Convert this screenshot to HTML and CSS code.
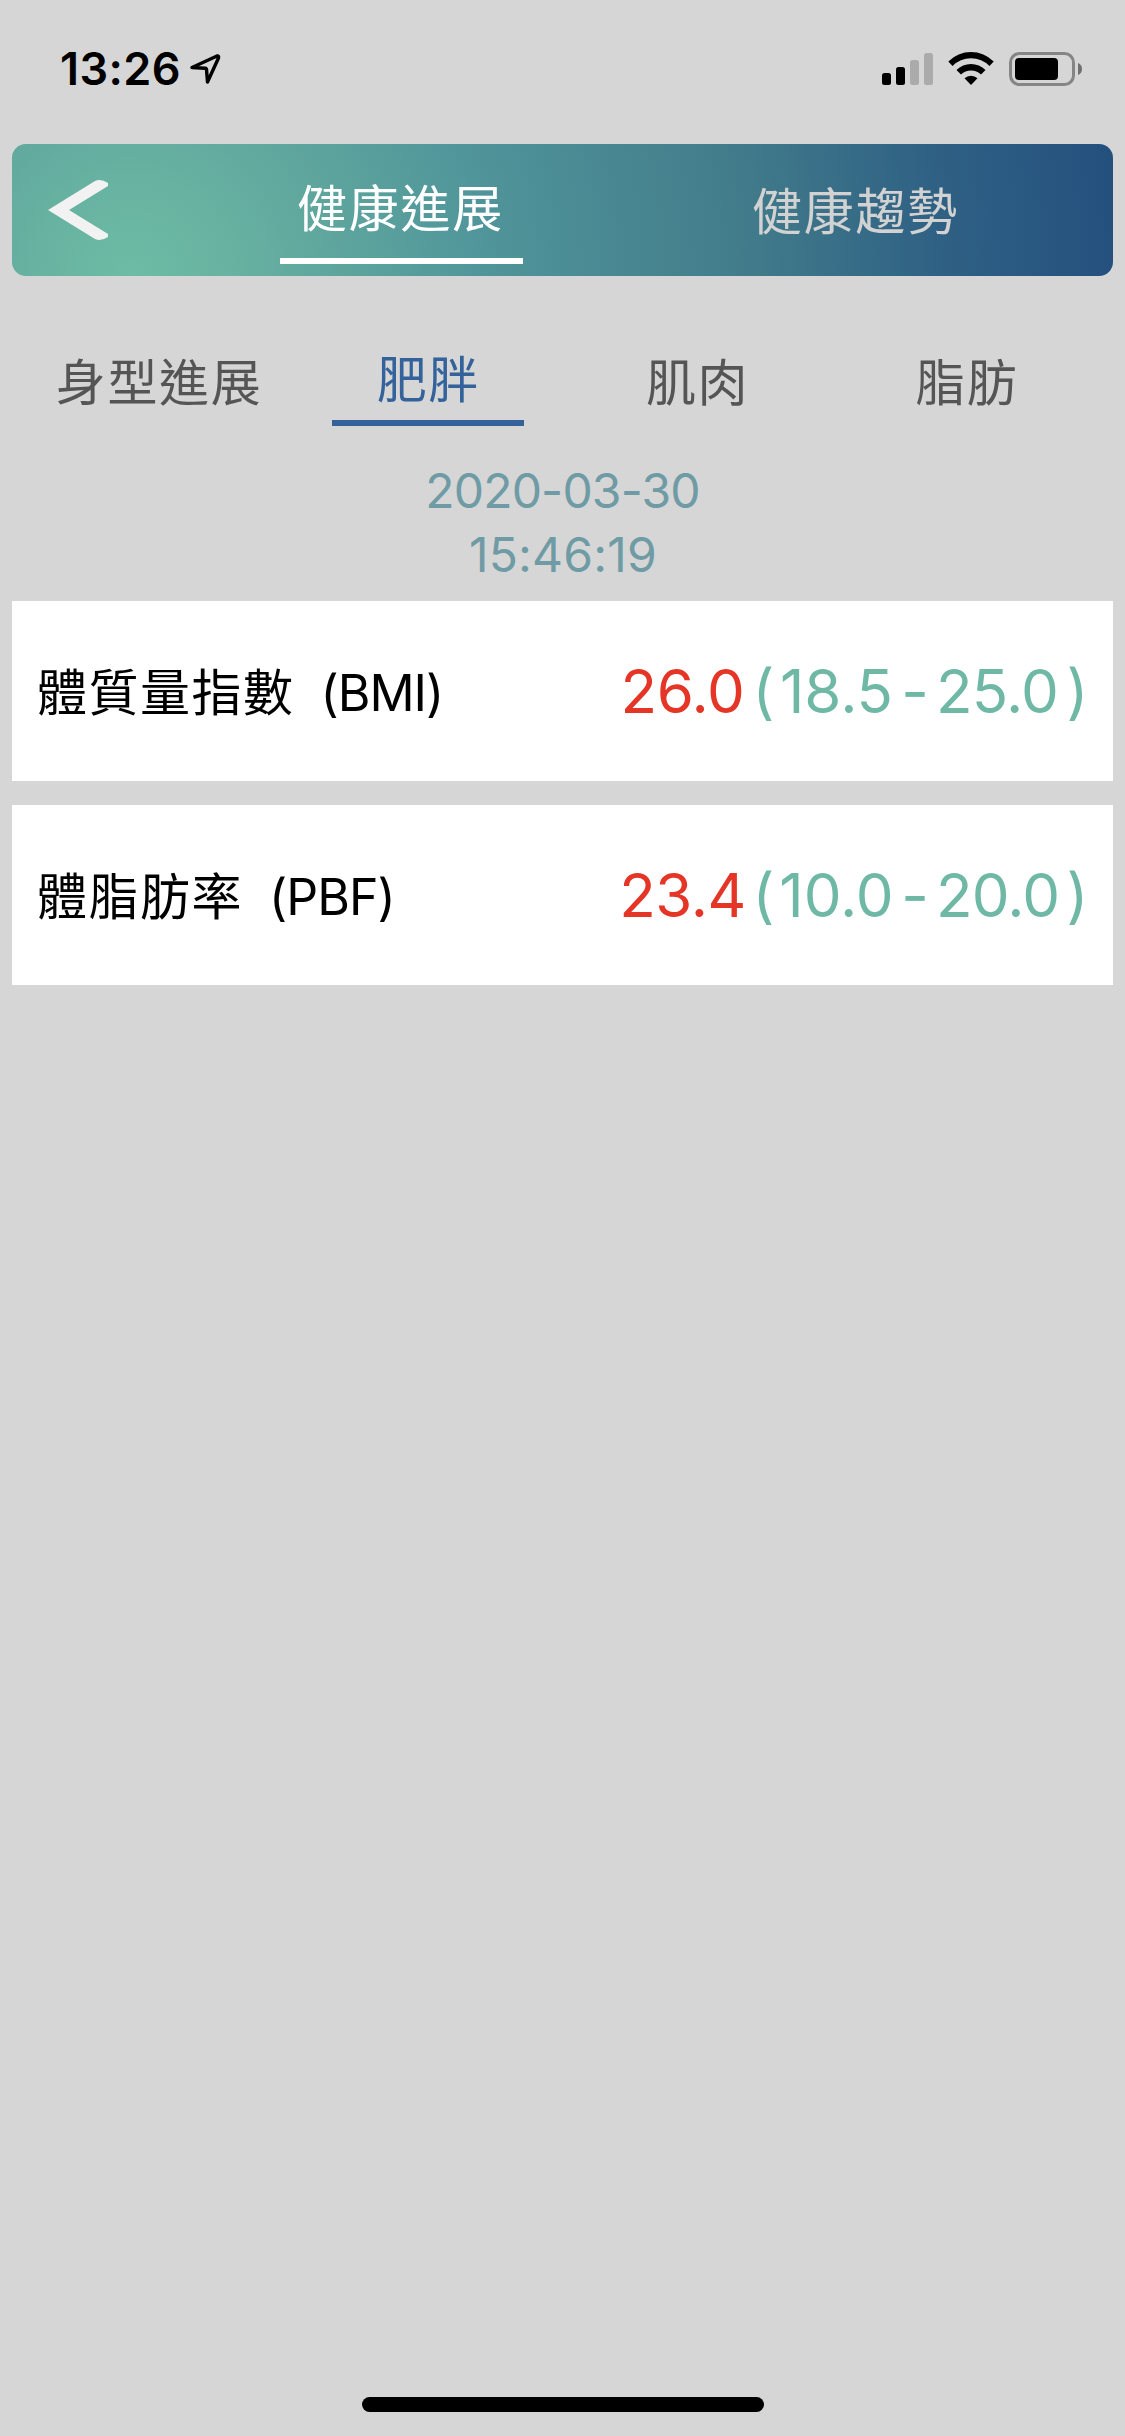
FILE: index.html
```html
<!DOCTYPE html>
<html lang="zh-Hant">
<head>
    <meta charset="utf-8">
    <title>健康進展</title>
    <link rel="stylesheet" href="styles.css">
</head>
<body>

    <div class="status-bar">
        <span class="clock">13:26</span>
        <svg class="location" width="32" height="32" viewBox="0 0 32 32">
            <path d="M3 14.5 L28 3 Q30 2.500 29.500 5 L18.500 29 L17.500 16.500 Q17.500 15.500 16 15.300 Z" fill="none" stroke="#000" stroke-width="3.400" stroke-linejoin="round"/>
        </svg>
        <svg class="indicators" width="202" height="36" viewBox="0 0 202 36">
            <!-- signal -->
            <rect x="0" y="22" width="9" height="12" rx="2.500"/>
            <rect x="14" y="16" width="9" height="18" rx="2.500"/>
            <rect x="28" y="9" width="9" height="25" rx="2.500" fill="#ababab"/>
            <rect x="42" y="2" width="9" height="32" rx="2.500" fill="#ababab"/>
            <!-- wifi -->
            <path d="M66.300 10.500 A32 32 0 0 1 111.700 10.500 L107.500 15 A26 26 0 0 0 70.500 15 Z"/>
            <path d="M74.500 19 A20.500 20.500 0 0 1 103.500 19 L99 23.500 A14.500 14.500 0 0 0 79 23.500 Z"/>
            <path d="M82.500 27.200 A9.500 9.500 0 0 1 95.500 27.200 L89 34 Z"/>
            <!-- battery -->
            <rect x="128.500" y="2.500" width="63" height="31" rx="9" fill="none" stroke="#858585" stroke-width="3"/>
            <rect x="133" y="7" width="43" height="22" rx="4" />
            <path d="M196 12 Q200 13.500 200 18 Q200 22.500 196 24 Z" fill="#707070"/>
        </svg>
    </div>

    <div class="header">
        <svg class="back" width="60" height="60" viewBox="0 0 60 60">
            <path d="M0 30 L47 1 Q53 -1.500 60 3 V6 L21 30 L60 54 V57 Q53 61.500 47 59 Z" fill="#f2f2f2"/>
        </svg>
        <div class="header-tabs">
            <div class="header-tab active">健康進展</div>
            <div class="header-tab">健康趨勢</div>
        </div>
    </div>

    <div class="tabs">
        <div class="tab"><span>身型進展</span></div>
        <div class="tab active"><span>肥胖</span></div>
        <div class="tab"><span>肌肉</span></div>
        <div class="tab"><span>脂肪</span></div>
    </div>

    <div class="date">
        <div class="day">2020-03-30</div>
        <div class="time">15:46:19</div>
    </div>

    <div class="list">
        <div class="card">
            <div class="label">體質量指數<span class="abbr">(BMI)</span></div>
            <div class="value">
                <span class="current">26.0</span>
                <span class="paren">(</span>
                <span class="min">18.5</span>
                <span class="dash">-</span>
                <span class="max">25.0</span>
                <span class="paren close">)</span>
            </div>
        </div>
        <div class="card">
            <div class="label">體脂肪率<span class="abbr">(PBF)</span></div>
            <div class="value">
                <span class="current">23.4</span>
                <span class="paren">(</span>
                <span class="min">10.0</span>
                <span class="dash">-</span>
                <span class="max">20.0</span>
                <span class="paren close">)</span>
            </div>
        </div>
    </div>

    <div class="home-bar"></div>

</body>
</html>
```

FILE: styles.css
```css
* {
    box-sizing: border-box;
}

body {
    margin: 0;
    height: 2436px;
    display: flex;
    flex-direction: column;
    background: #d6d6d6;
    font-family: Inter, "Noto Sans CJK TC", sans-serif;
    font-size: 50px;
    color: #000;
    overflow: hidden;
}

/* status bar */
.status-bar {
    height: 144px;
    padding: 51px 41px 0 60px;
    display: flex;
    align-items: flex-start;
}

.clock {
    width: 129px;
    font-size: 45px;
    font-weight: 600;
    line-height: 36px;
    letter-spacing: 0.4px;
    white-space: nowrap;
}

.location {
    margin-top: 2px;
}

.indicators {
    margin-left: auto;
}

/* header */
.header {
    height: 132px;
    margin: 0 12px;
    padding-left: 36px;
    display: flex;
    align-items: center;
    border-radius: 14px;
    background: radial-gradient(circle 984px at 120px 132px, #6dbca4 0%, #67b2a1 10%, #61a89e 18%, #50959a 36%, #427c8b 62%, #2f6184 82%, #24507e 100%);
}

.header-tabs {
    flex: 1;
    height: 132px;
    padding: 0 136px 0 172px;
    display: flex;
    justify-content: space-between;
    align-items: flex-start;
}

.header-tab {
    width: 243px;
    height: 120px;
    padding-top: 8px;
    text-align: center;
    line-height: 120px;
    letter-spacing: 1.7px;
    color: #d2d2d2;
}

.header-tab.active {
    padding-top: 5px;
    padding-right: 2px;
    border-bottom: 6px solid #fff;
    color: #fff;
}

/* body part tabs */
.tabs {
    height: 150px;
    padding: 0 24px;
    display: flex;
    color: #555;
}

.tab {
    flex: 1;
    display: flex;
    justify-content: center;
    line-height: 75px;
    padding-top: 70px;
    padding-left: 1px;
    letter-spacing: 1.7px;
}

.tab.active span {
    width: 192px;
    height: 83px;
    margin-top: -3px;
    text-align: center;
    border-bottom: 6px solid #34639b;
    color: #34639b;
}

/* date */
.date {
    height: 175px;
    padding-top: 33px;
    text-align: center;
    font-size: 48px;
    line-height: 64px;
    color: #6f9ba5;
}

.day {
    letter-spacing: -0.8px;
}

.time {
    padding-left: 1px;
    letter-spacing: 0.2px;
}

/* cards */
.list {
    margin: 0 12px;
    display: flex;
    flex-direction: column;
    gap: 24px;
}

.card {
    height: 180px;
    padding: 0 24px 0 25px;
    display: flex;
    justify-content: space-between;
    align-items: center;
    background: #fff;
}

.label {
    padding-bottom: 4px;
    letter-spacing: 1.5px;
}

.abbr {
    margin-left: 26px;
    letter-spacing: -1px;
}

.value {
    display: flex;
    font-size: 60px;
    text-align: center;
    color: #6fb8a5;
}

.current {
    width: 131px;
    letter-spacing: -0.4px;
    color: #e43526;
}

.paren {
    width: 31px;
}

.paren.close {
    padding-left: 8px;
}

.min {
    width: 115px;
}

.dash {
    width: 42px;
}

.max {
    width: 122px;
    letter-spacing: -0.8px;
}

/* home indicator */
.home-bar {
    width: 402px;
    height: 15px;
    margin: auto auto 24px;
    border-radius: 8px;
    background: #000;
}
```
